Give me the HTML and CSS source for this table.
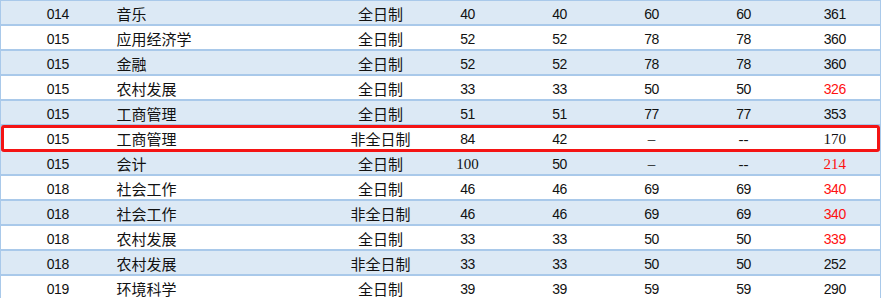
FILE: index.html
```html
<!DOCTYPE html>
<html lang="zh">
<head>
<meta charset="utf-8">
<link rel="stylesheet" href="styles.css">
</head>
<body>
<div class="wrap">
<table class="grid">
<colgroup>
<col class="c1"><col class="c2"><col class="c3"><col class="c4"><col class="c5"><col class="c6"><col class="c7"><col class="c8">
</colgroup>
<tbody>
<tr class="odd"><td class="num">014</td><td class="name">音乐</td><td class="cn">全日制</td><td class="num">40</td><td class="num">40</td><td class="num">60</td><td class="num">60</td><td class="num">361</td></tr>
<tr><td class="num">015</td><td class="name">应用经济学</td><td class="cn">全日制</td><td class="num">52</td><td class="num">52</td><td class="num">78</td><td class="num">78</td><td class="num">360</td></tr>
<tr class="odd"><td class="num">015</td><td class="name">金融</td><td class="cn">全日制</td><td class="num">52</td><td class="num">52</td><td class="num">78</td><td class="num">78</td><td class="num">360</td></tr>
<tr><td class="num">015</td><td class="name">农村发展</td><td class="cn">全日制</td><td class="num">33</td><td class="num">33</td><td class="num">50</td><td class="num">50</td><td class="num red">326</td></tr>
<tr class="odd"><td class="num">015</td><td class="name">工商管理</td><td class="cn">全日制</td><td class="num">51</td><td class="num">51</td><td class="num">77</td><td class="num">77</td><td class="num">353</td></tr>
<tr><td class="num">015</td><td class="name">工商管理</td><td class="cn">非全日制</td><td class="num">84</td><td class="num">42</td><td class="num serif">–</td><td class="num serif">--</td><td class="num serif">170</td></tr>
<tr class="odd"><td class="num">015</td><td class="name">会计</td><td class="cn">全日制</td><td class="num serif">100</td><td class="num">50</td><td class="num serif">–</td><td class="num serif">--</td><td class="num serif red">214</td></tr>
<tr><td class="num">018</td><td class="name">社会工作</td><td class="cn">全日制</td><td class="num">46</td><td class="num">46</td><td class="num">69</td><td class="num">69</td><td class="num red">340</td></tr>
<tr class="odd"><td class="num">018</td><td class="name">社会工作</td><td class="cn">非全日制</td><td class="num">46</td><td class="num">46</td><td class="num">69</td><td class="num">69</td><td class="num red">340</td></tr>
<tr><td class="num">018</td><td class="name">农村发展</td><td class="cn">全日制</td><td class="num">33</td><td class="num">33</td><td class="num">50</td><td class="num">50</td><td class="num red">339</td></tr>
<tr class="odd"><td class="num">018</td><td class="name">农村发展</td><td class="cn">非全日制</td><td class="num">33</td><td class="num">33</td><td class="num">50</td><td class="num">50</td><td class="num">252</td></tr>
<tr><td class="num">019</td><td class="name">环境科学</td><td class="cn">全日制</td><td class="num">39</td><td class="num">39</td><td class="num">59</td><td class="num">59</td><td class="num">290</td></tr>
</tbody>
</table>
<div class="highlight"></div>
</div>
</body>
</html>
```
FILE: styles.css
```css
html, body {
  margin: 0;
  padding: 0;
  background: #ffffff;
}
.wrap {
  position: relative;
  width: 880px;
  margin-top: -1px;
}
.grid {
  border-collapse: collapse;
  table-layout: fixed;
  width: 880px;
  border-top: 2px solid #a9c9ea;
  border-left: 1px solid #a9c9ea;
  border-right: 1px solid #a9c9ea;
  font-family: "Noto Sans CJK SC", sans-serif;
  color: #111;
}
.c1 { width: 114px; }
.c2 { width: 225px; }
.c3 { width: 82px; }
.c4, .c5, .c6, .c7 { width: 92px; }
.c8 { width: 91px; }
.grid tr {
  height: 25px;
  border-bottom: 2px solid #a9c9ea;
}
.grid tr.odd {
  background: #dce9f5;
}
.grid td {
  padding: 3px 0 0 0;
  height: 20px;
  line-height: 20px;
  text-align: center;
  white-space: nowrap;
}
.grid td.num {
  font-family: "Liberation Sans", sans-serif;
  font-size: 14px;
  letter-spacing: -0.5px;
}
.grid td.serif {
  font-family: "Liberation Serif", serif;
  font-size: 15px;
  letter-spacing: 0;
}
.grid td.name {
  text-align: left;
  padding-left: 2px;
  font-size: 15px;
}
.grid td.cn {
  font-size: 15px;
}
.grid td.red {
  color: #ff1010;
}
.highlight {
  position: absolute;
  left: 1px;
  top: 126px;
  width: 873px;
  height: 21px;
  border: 3px solid #f41414;
  border-radius: 3px;
}
```
